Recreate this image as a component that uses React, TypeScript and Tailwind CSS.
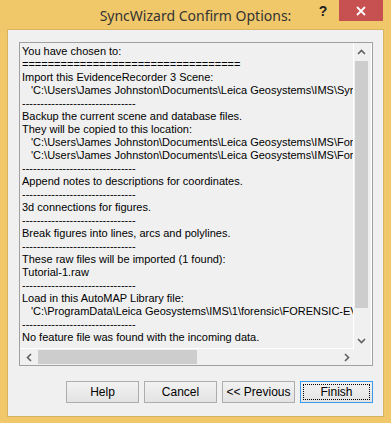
import React from "react";

const lines: { t: string; indent?: boolean }[] = [
  { t: "You have chosen to:" },
  { t: "==================================" },
  { t: "Import this EvidenceRecorder 3 Scene:" },
  { t: "'C:\\Users\\James Johnston\\Documents\\Leica Geosystems\\IMS\\SyncWizard\\Tutorial-1'", indent: true },
  { t: "-------------------------------" },
  { t: "Backup the current scene and database files." },
  { t: "They will be copied to this location:" },
  { t: "'C:\\Users\\James Johnston\\Documents\\Leica Geosystems\\IMS\\Forensic\\Backup'", indent: true },
  { t: "'C:\\Users\\James Johnston\\Documents\\Leica Geosystems\\IMS\\Forensic\\Backup'", indent: true },
  { t: "-------------------------------" },
  { t: "Append notes to descriptions for coordinates." },
  { t: "-------------------------------" },
  { t: "3d connections for figures." },
  { t: "-------------------------------" },
  { t: "Break figures into lines, arcs and polylines." },
  { t: "-------------------------------" },
  { t: "These raw files will be imported (1 found):" },
  { t: "Tutorial-1.raw" },
  { t: "-------------------------------" },
  { t: "Load in this AutoMAP Library file:" },
  { t: "'C:\\ProgramData\\Leica Geosystems\\IMS\\1\\forensic\\FORENSIC-EVIDENCE.fli'", indent: true },
  { t: "-------------------------------" },
  { t: "No feature file was found with the incoming data." },
];

const font = { fontFamily: '"Liberation Sans", Arial, sans-serif' };

function Btn({ label, focus }: { label: string; focus?: boolean }) {
  return (
    <div
      className={`w-[73px] h-[22px] border ${
        focus ? "border-[#3c99e8]" : "border-[#adadad]"
      } bg-gradient-to-b from-[#f2f2f2] to-[#e3e3e3] p-[2px] flex`}
    >
      <div
        className={`flex-1 flex items-center justify-center text-[12px] text-black ${
          focus ? "border border-dotted border-black" : ""
        }`}
      >
        {label}
      </div>
    </div>
  );
}

export default function App() {
  return (
    <div
      className="w-[391px] h-[423px] bg-[#f0c86a] relative flex flex-col"
      style={font}
    >
      {/* title bar */}
      <div className="h-[29px] flex items-center justify-center">
        <span
          className="text-[14px] text-[#333] mt-[1px]"
          style={{ fontFamily: '"Noto Sans", "Open Sans", sans-serif' }}
        >
          SyncWizard Confirm Options:
        </span>
      </div>
      <div
        className="absolute left-[315px] top-[1px] w-[16px] h-[20px] flex items-center justify-center text-[14px] font-bold text-[#222]"
        style={{ fontFamily: '"Liberation Sans", Arial, sans-serif' }}
      >
        ?
      </div>
      <div className="absolute left-[339px] top-0 w-[44px] h-[21px] bg-[#c75050] flex items-center justify-center">
        <svg width="10" height="10" viewBox="0 0 10 10">
          <path d="M1 1 L9 9 M9 1 L1 9" stroke="#fff" strokeWidth="1.8" />
        </svg>
      </div>

      {/* client */}
      <div className="ml-[7px] w-[377px] h-[388px] border border-[#d8b461] bg-[#f0f0f0] pl-[11px] pt-[12px] flex flex-col">
        <div className="w-[354px] h-[324px] border border-[#a0a0a0] bg-white pr-[1px] pb-[0px] flex flex-col">
          <div className="flex h-[306px]">
            <div className="w-[335px] h-[306px] bg-[#f0f0f0] border-r border-b border-white overflow-hidden pl-[2px] pt-[2px]">
              {lines.map((l, i) => (
                <div
                  key={i}
                  className={`h-[13px] leading-[13px] text-[11px] text-black whitespace-pre ${
                    l.indent ? "pl-[9px]" : ""
                  }`}
                >
                  {l.t}
                </div>
              ))}
            </div>
            {/* vertical scrollbar */}
            <div className="w-[15px] h-[306px] bg-[#f0f0f0] flex flex-col">
              <div className="h-[18px] flex items-center justify-center">
                <svg width="9" height="6" viewBox="0 0 9 6">
                  <path d="M1 5 L4.5 1.5 L8 5" stroke="#606060" strokeWidth="1.6" fill="none" />
                </svg>
              </div>
              <div className="mx-[1px] h-[247px] bg-[#cdcdcd]" />
              <div className="flex-1 flex items-end justify-center pb-[5px]">
                <svg width="9" height="6" viewBox="0 0 9 6">
                  <path d="M1 1 L4.5 4.5 L8 1" stroke="#606060" strokeWidth="1.6" fill="none" />
                </svg>
              </div>
            </div>
            <div className="w-[2px] bg-[#f0f0f0]" />
          </div>
          {/* horizontal scrollbar */}
          <div className="flex h-[16px] bg-[#f0f0f0]">
            <div className="w-[18px] flex items-center justify-center">
              <svg width="6" height="9" viewBox="0 0 6 9">
                <path d="M5 1 L1.5 4.5 L5 8" stroke="#606060" strokeWidth="1.6" fill="none" />
              </svg>
            </div>
            <div className="w-[159px] my-[1px] bg-[#cdcdcd]" />
            <div className="w-[141px]" />
            <div className="w-[17px] flex items-center justify-center">
              <svg width="6" height="9" viewBox="0 0 6 9">
                <path d="M1 1 L4.5 4.5 L1 8" stroke="#606060" strokeWidth="1.6" fill="none" />
              </svg>
            </div>
            <div className="flex-1" />
          </div>
        </div>
        <div className="mt-[15px] w-[354px] flex justify-end gap-[5px]">
          <Btn label="Help" />
          <Btn label="Cancel" />
          <Btn label="<< Previous" />
          <Btn label="Finish" focus />
        </div>
      </div>
    </div>
  );
}
